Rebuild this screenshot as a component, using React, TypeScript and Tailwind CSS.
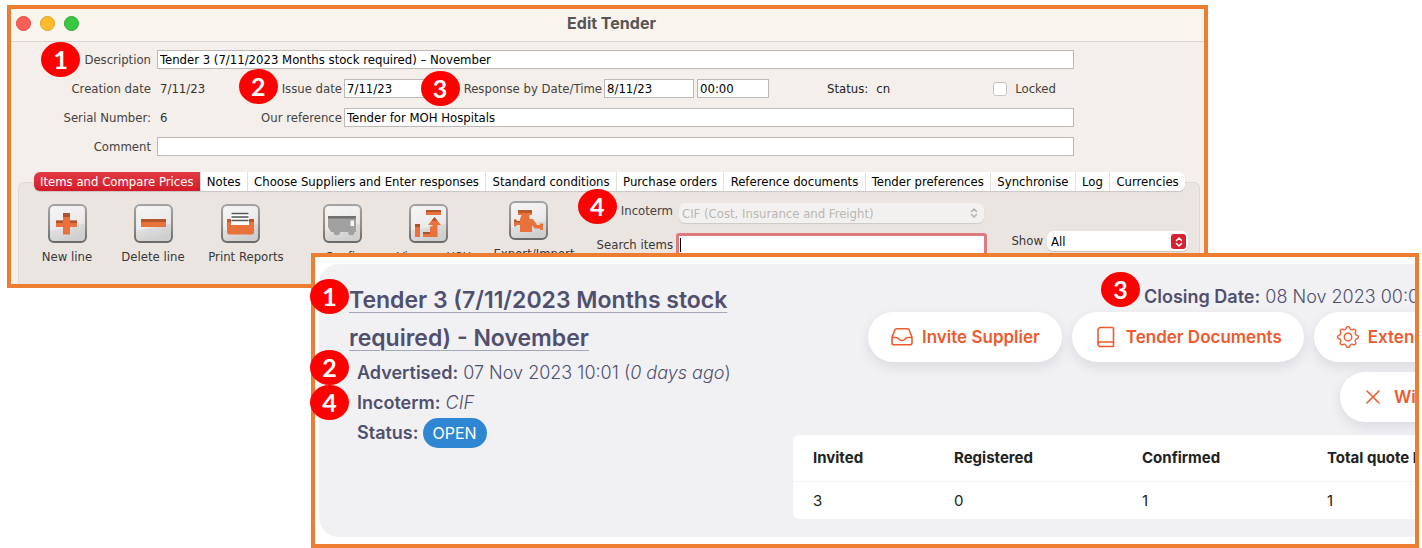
import { useId, type ReactNode } from "react";
import clsx from "clsx";
import { BsGear } from "react-icons/bs";

const TABS = [
  "Notes",
  "Choose Suppliers and Enter responses",
  "Standard conditions",
  "Purchase orders",
  "Reference documents",
  "Tender preferences",
  "Synchronise",
  "Log",
  "Currencies",
];

function Marker({ n, className }: { n: number; className: string }) {
  return (
    <span
      className={clsx(
        "absolute z-10 flex h-[35px] w-[39px] items-center justify-center rounded-[50%] bg-[#fe0000] font-['Lato',sans-serif] text-[25px] leading-none font-bold text-white",
        className
      )}
    >
      {n}
    </span>
  );
}

function ToolIcon({ children }: { children: ReactNode }) {
  const id = useId();
  return (
    <svg width="39" height="39" viewBox="0 0 39 39" aria-hidden="true">
      <defs>
        <linearGradient id={`${id}-face`} x1="0" y1="0" x2="0.4" y2="1">
          <stop offset="0" stopColor="#f2f2f2" />
          <stop offset="0.55" stopColor="#e3e3e3" />
          <stop offset="1" stopColor="#cfcfcf" />
        </linearGradient>
        <linearGradient id={`${id}-edge`} x1="0" y1="0" x2="0" y2="1">
          <stop offset="0" stopColor="#a3a3a3" />
          <stop offset="0.6" stopColor="#8b8b8b" />
          <stop offset="1" stopColor="#6a6a6a" />
        </linearGradient>
      </defs>
      <rect x="1" y="1" width="37" height="37" rx="5" fill={`url(#${id}-face)`} stroke={`url(#${id}-edge)`} strokeWidth="2" />
      <path d="M2.5 26C14 26 25 21 36.5 20V6a3.500 3.500 0 0 0-3.500-3.500H6A3.500 3.500 0 0 0 2.500 6Z" fill="#fff" opacity="0.35" />
      {children}
    </svg>
  );
}

function Tool({ label, icon, className, wide }: { label: string; icon: ReactNode; className?: string; wide?: boolean }) {
  return (
    <button type="button" className={clsx("flex flex-col items-center gap-1 whitespace-nowrap", className)}>
      <span className={wide ? "mr-3" : ""}>
        <ToolIcon>{icon}</ToolIcon>
      </span>
      <span className="leading-5">{label}</span>
    </button>
  );
}

const plusIcon = (
  <>
    <path d="M15 9h7v7.500h7v6.500h-7v7.500h-7V23H8v-6.500h7z" fill="#e9713c" />
    <path d="M15 9h7v4h-7zM8 16.500h7v2.500H8zM22 16.500h7v2.500h-7z" fill="#9c4a22" opacity="0.75" />
  </>
);

const minusIcon = (
  <>
    <path d="M7 15h25v8H7z" fill="#e9713c" />
    <path d="M7 15h25v3H7z" fill="#9c4a22" opacity="0.7" />
  </>
);

const printIcon = (
  <>
    <path d="M6 15h27v13a2.500 2.500 0 0 1-2.500 2.500h-22A2.500 2.500 0 0 1 6 28z" fill="#e9713c" />
    <path d="M6 15h27v3H6z" fill="#9c4a22" opacity="0.6" />
    <path d="M10 8h18v13H10z" fill="#fff" />
    <path d="M10.500 9.500h17M10.500 13h17M10.500 16.500h17" stroke="#555" strokeWidth="1.600" />
  </>
);

const truckIcon = (
  <>
    <path d="M5 12h28v16h-1.500a3.200 3.200 0 0 1-6.400 0H17a3.200 3.200 0 0 1-6.400 0H8L5 23z" fill="#a0a0a0" />
    <path d="M5 12h28v2.500H5z" fill="#6f6f6f" />
    <path d="M27.500 16.500h3.500v5.500h-3.500z" fill="#f5f5f5" />
  </>
);

const viewIcon = (
  <>
    <path d="M17 6h15v5H17zM6 20h5v13H6zM14 28h7v-5.500h2.500V21H19l6.500-8 6.500 8h-3.500v12H14z" fill="#e9713c" />
    <path d="M17 6h15v2H17zM6 20h5v3H6zM14 28h7v2h-7zM25.500 13l3 3.700h-6z" fill="#9c4a22" opacity="0.75" />
  </>
);

const exportIcon = (
  <>
    <path d="M9 9h14v5h-2.500v4H24l4 6h2.500l1-1.500H34V29h-2.500l-1-1.500H26l-3-3v6.500H11v-7H8l-1 1.500H5v-7h2L8 20h3v-2l1.500-4H9z" fill="#e9713c" />
    <path d="M9 9h14v3H9zM5 18.500h2L8 20h3v1.500H5z" fill="#9c4a22" opacity="0.6" />
  </>
);

function UpDown({ className }: { className?: string }) {
  return (
    <svg viewBox="0 0 8 12" fill="none" stroke="currentColor" strokeWidth="1.500" strokeLinecap="round" strokeLinejoin="round" className={className} aria-hidden="true">
      <path d="M1.500 4.500 4 2l2.500 2.500M1.500 7.500 4 10l2.500-2.500" />
    </svg>
  );
}

const labelCls = "relative whitespace-nowrap text-[#454240]";
const inputCls = "h-[19px] border border-[#bdb9b7] bg-white px-[2px] text-black outline-none";

function EditTender() {
  return (
    <section className="mr-[214px] ml-[7px] border-4 border-[#ed7d31] bg-[#f4efeb] font-['DejaVu_Sans_Condensed','DejaVu_Sans',sans-serif] text-[13px] leading-[19px]">
      <header className="relative flex h-[33px] items-center justify-center border-b border-[#d9d4d1] bg-[#faf4ee] pb-1 pl-2">
        <div className="absolute left-[5px] flex gap-[9px]">
          <span className="size-[15px] rounded-full border border-[#e2463f] bg-[#fb5f57]" />
          <span className="size-[15px] rounded-full border border-[#e09f22] bg-[#fcbc2e]" />
          <span className="size-[15px] rounded-full border border-[#2aab34] bg-[#3ac842]" />
        </div>
        <h1 className="font-['Inter',sans-serif] text-base font-bold text-[#575553]">Edit Tender</h1>
      </header>

      <form className="mr-[130px] flex flex-col gap-[10px] pt-2">
        <div className="flex">
          <div className="mr-[6px] w-[140px] text-right">
            <label htmlFor="description" className={labelCls}>
              Description
              <Marker n={1} className="-top-[10px] right-full mr-1" />
            </label>
          </div>
          <input id="description" className={clsx(inputCls, "min-w-0 flex-1")} defaultValue="Tender 3 (7/11/2023 Months stock required) – November" />
        </div>

        <div className="flex">
          <span className="mr-[6px] w-[140px] text-right text-[#454240]">Creation date</span>
          <div className="mr-[2px] flex w-[185px] justify-between pl-[3px]">
            <span className="text-[#333]">7/11/23</span>
            <label htmlFor="issue-date" className={labelCls}>
              Issue date
              <Marker n={2} className="-top-[10px] right-full mr-1" />
            </label>
          </div>
          <input id="issue-date" className={clsx(inputCls, "w-[85px]")} defaultValue="7/11/23" />
          <div className="mr-[2px] w-[173px] text-right">
            <label htmlFor="response-date" className={labelCls}>
              Response by Date/Time
              <Marker n={3} className="-top-[10px] right-full mr-1" />
            </label>
          </div>
          <input id="response-date" className={clsx(inputCls, "mr-[3px] w-[90px]")} defaultValue="8/11/23" />
          <input aria-label="Response time" className={clsx(inputCls, "w-[72px]")} defaultValue="00:00" />
          <span className="ml-[58px] flex gap-2 text-[#222]">
            <span>Status:</span>
            <span>cn</span>
          </span>
          <label className="mr-[18px] ml-auto flex items-center gap-2 text-[#454240]">
            <input type="checkbox" className="size-[14px] appearance-none rounded-[3px] border border-[#c8c4c2] bg-white" />
            Locked
          </label>
        </div>

        <div className="flex">
          <span className="mr-[6px] w-[140px] text-right text-[#454240]">Serial Number:</span>
          <div className="mr-[2px] flex w-[185px] justify-between pl-[3px]">
            <span className="text-[#333]">6</span>
            <label htmlFor="reference" className={labelCls}>
              Our reference
            </label>
          </div>
          <input id="reference" className={clsx(inputCls, "min-w-0 flex-1")} defaultValue="Tender for MOH Hospitals" />
        </div>

        <div className="flex">
          <label htmlFor="comment" className="mr-[6px] w-[140px] text-right text-[#454240]">
            Comment
          </label>
          <input id="comment" className={clsx(inputCls, "min-w-0 flex-1")} />
        </div>
      </form>

      <div className="mt-[26px] mr-1 ml-[7px] rounded-t-md border border-b-0 border-[#dfd9d6] bg-[#ebe5e2] pb-[17px]">
        <nav className="-mt-[11px] mr-[14px] ml-[15px] flex h-[19px] rounded-md bg-white shadow-[0_1px_1px_#c9c4c1]">
          <button type="button" className="rounded-l-md bg-linear-to-b from-[#e23a43] to-[#d31a27] px-[6px] whitespace-nowrap text-white">
            Items and Compare Prices
          </button>
          {TABS.map((tab) => (
            <button key={tab} type="button" className="flex-auto border-l border-[#e3e0de] text-center whitespace-nowrap text-black">
              {tab}
            </button>
          ))}
        </nav>

        <div className="flex items-start pt-[10px] text-[#3a3735]">
          <div className="flex pt-[3px] pl-[5px]">
            <Tool className="w-[86px]" label="New line" icon={plusIcon} />
            <Tool className="w-[86px]" label="Delete line" icon={minusIcon} />
            <Tool className="w-[100px]" wide label="Print Reports" icon={printIcon} />
            <Tool className="ml-[9px] w-[86px]" wide label="Confirm" icon={truckIcon} />
            <Tool className="w-[86px]" wide label="View on USH" icon={viewIcon} />
          </div>
          <Tool className="ml-[13px] w-[88px]" wide label="Export/Import" icon={exportIcon} />

          <div className="ml-[18px] grid min-w-0 flex-1 grid-cols-[80px_minmax(0,1fr)] gap-y-[10px]">
            <div className="mr-[3px] text-right">
              <label htmlFor="incoterm" className={labelCls}>
                Incoterm
                <Marker n={4} className="-top-[14px] right-full mr-1" />
              </label>
            </div>
            <div className="relative mx-[3px] mt-[2px]">
              <select id="incoterm" disabled className="h-[20px] w-full appearance-none rounded-md bg-[#f3f1ef] pl-[3px] text-[#b9b6b4] shadow-[0_1px_1px_#cdc8c5] opacity-100">
                <option>CIF (Cost, Insurance and Freight)</option>
              </select>
              <UpDown className="pointer-events-none absolute top-1 right-[6px] h-3 w-2 text-[#b3b0ae]" />
            </div>
            <label htmlFor="search" className="mt-[2px] mr-[3px] text-right whitespace-nowrap">
              Search items
            </label>
            <div className="relative">
              <input id="search" className="h-[26px] w-full rounded-[3px] border-[3px] border-[#df7a80] bg-white px-1 outline-none" />
              <span className="absolute top-[5px] left-1 h-[14px] w-px bg-black" />
            </div>
          </div>

          <div className="mt-[30px] mr-[11px] ml-[24px] flex gap-1">
            <label htmlFor="show">Show</label>
            <div className="relative">
              <select id="show" className="h-[20px] w-[141px] appearance-none rounded-md bg-white pl-1 text-black shadow-[0_1px_1px_#c9c4c1]">
                <option>All</option>
              </select>
              <span className="pointer-events-none absolute top-[3px] right-[2px] flex size-[15px] items-center justify-center rounded-[3px] bg-[#d9222f] text-white">
                <UpDown className="h-3 w-2" />
              </span>
            </div>
          </div>
        </div>
      </div>
    </section>
  );
}

function InboxIcon() {
  return (
    <svg width="22" height="22" viewBox="0 0 22 22" fill="none" stroke="currentColor" strokeWidth="1.600" strokeLinejoin="round" aria-hidden="true">
      <path d="M1 11.500 3.800 4a2 2 0 0 1 1.900-1.300h10.600A2 2 0 0 1 18.200 4l2.800 7.500v5.300a2 2 0 0 1-2 2H3a2 2 0 0 1-2-2z" />
      <path d="M1 11.500h4.300c2 0 2.700 3 5.700 3s3.700-3 5.700-3H21" />
    </svg>
  );
}

function BookIcon() {
  return (
    <svg width="22" height="22" viewBox="0 0 22 22" fill="none" stroke="currentColor" strokeWidth="1.600" strokeLinejoin="round" aria-hidden="true">
      <path d="M3 18.200V4a2.500 2.500 0 0 1 2.500-2.500h12a1 1 0 0 1 1 1v18h-13A2.400 2.400 0 0 1 3 18.200 2.400 2.400 0 0 1 5.500 16h13" />
    </svg>
  );
}

function CrossIcon() {
  return (
    <svg width="22" height="22" viewBox="0 0 22 22" fill="none" stroke="currentColor" strokeWidth="1.600" strokeLinecap="round" aria-hidden="true">
      <path d="m4 5 12 12M16 5 4 17" />
    </svg>
  );
}

function PillButton({ icon, label }: { icon: ReactNode; label: string }) {
  return (
    <button
      type="button"
      className="flex h-[50px] shrink-0 items-center gap-[9px] rounded-full bg-white pr-[22px] pl-[23px] text-[17px] font-semibold whitespace-nowrap text-[#ee5a2f] shadow-[0_5px_12px_rgba(60,60,90,0.12)]"
    >
      {icon}
      {label}
    </button>
  );
}

const STATS = [
  { label: "Invited", value: 3, width: "w-[141px]" },
  { label: "Registered", value: 0, width: "w-[188px]" },
  { label: "Confirmed", value: 1, width: "w-[185px]" },
  { label: "Total quote lines", value: 1, width: "w-[180px]" },
];

function TenderCard() {
  return (
    <section className="relative -mt-[35px] mr-[3px] ml-[311px] border-4 border-[#ed7d31] bg-white py-[7px] pl-1 font-['Inter',sans-serif] text-lg text-[#50506e]">
      <div className="flex rounded-l-[20px] bg-[#f1f1f4]">
        <div className="w-[474px] shrink-0 pt-[17px] pr-10 pl-[30px]">
          <h2 className="relative text-[23px] leading-[38px] font-semibold">
            <a href="#tender" className="underline decoration-[#a5a5ba] decoration-1 underline-offset-4">
              Tender 3 (7/11/2023 Months stock required) - November
            </a>
            <Marker n={1} className="-top-[2px] right-full" />
          </h2>
          <div className="pt-px pl-2 leading-[30px] font-light">
            <p className="relative whitespace-nowrap">
              <b className="font-semibold">Advertised:</b> 07 Nov 2023 10:01 (<i>0 days ago</i>)
              <Marker n={2} className="-top-[8px] right-full mr-2" />
            </p>
            <p className="relative">
              <b className="font-semibold">Incoterm:</b> <i>CIF</i>
              <Marker n={4} className="-top-[3px] right-full mr-2" />
            </p>
            <p className="flex items-center gap-1">
              <b className="font-semibold">Status:</b>
              <span className="rounded-full bg-[#2f87d3] px-[10px] text-base leading-[30px] font-normal text-white">OPEN</span>
            </p>
          </div>
        </div>

        <div className="min-w-0 flex-1 overflow-hidden py-[18px]">
          <p className="relative ml-[351px] w-max leading-[30px] font-light">
            <b className="font-semibold">Closing Date:</b> 08 Nov 2023 00:00
            <Marker n={3} className="-top-[10px] right-full mr-1" />
          </p>
          <div className="ml-[75px] flex gap-[10px]">
            <PillButton icon={<InboxIcon />} label="Invite Supplier" />
            <PillButton icon={<BookIcon />} label="Tender Documents" />
            <PillButton icon={<BsGear size={22} />} label="Extend Deadline" />
          </div>
          <div className="mt-[10px] ml-[547px] flex">
            <PillButton icon={<CrossIcon />} label="Withdraw" />
          </div>
          <table className="mt-[13px] w-[694px] table-fixed overflow-hidden rounded-md bg-white text-left text-[15px] text-[#222]">
            <thead>
              <tr className="h-[46px] border-b border-[#f6f6f7]">
                {STATS.map((s) => (
                  <th key={s.label} className={clsx("pl-5 font-bold whitespace-nowrap", s.width)}>
                    {s.label}
                  </th>
                ))}
              </tr>
            </thead>
            <tbody>
              <tr className="h-[38px]">
                {STATS.map((s) => (
                  <td key={s.label} className="pl-5">
                    {s.value}
                  </td>
                ))}
              </tr>
            </tbody>
          </table>
        </div>
      </div>
    </section>
  );
}

export default function App() {
  return (
    <main className="min-h-screen overflow-hidden bg-white pt-[5px]">
      <EditTender />
      <TenderCard />
    </main>
  );
}
